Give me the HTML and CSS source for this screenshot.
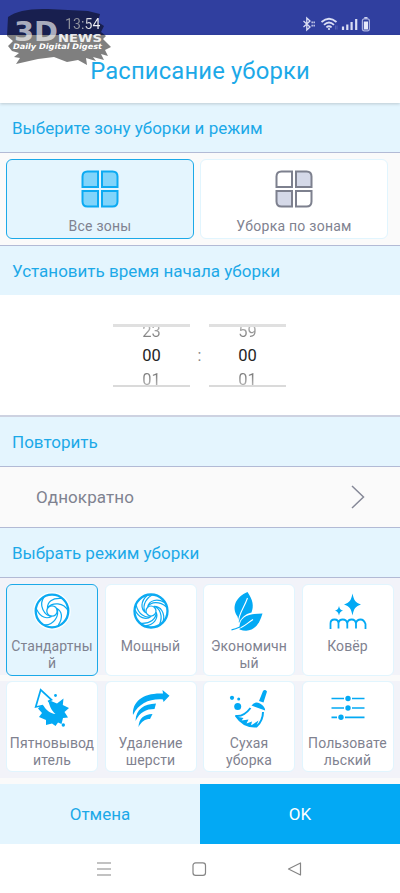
FILE: index.html
```html
<!DOCTYPE html>
<html lang="ru">
<head>
<meta charset="utf-8">
<meta name="viewport" content="width=device-width, initial-scale=1">
<title>Расписание уборки</title>
<link rel="stylesheet" href="styles.css">
</head>
<body>
<div class="phone">
  <div class="status">
    <span class="clock">13:54</span>
    <svg class="status-icons" width="70" height="16" viewBox="0 0 70 16" fill="none" stroke="#d9ddf4">
      <path d="M2.500 5 9 11 5.800 14V2L9 5 2.500 11" stroke-width="1.3"/>
      <path d="M10.500 6.300H14M10.500 9.700H14" stroke-width="1.7" stroke-dasharray="1.3 .7"/>
      <path d="M20.500 6Q28 -.5 35.500 6M23 8.800Q28 4.300 33 8.800M25.400 11.400Q28 9.200 30.600 11.400" stroke-width="1.8"/>
      <circle cx="28" cy="13" r="1.100" fill="#d9ddf4" stroke="none"/>
      <path d="M34.500 9.500v4M36 9.500v4" stroke="#5360b5" stroke-width="1"/>
      <path d="M42 14v-3.500M46.300 14V8.500M50.600 14V6M55.200 14V3" stroke-width="2.200"/>
      <rect x="61.400" y="2.800" width="7" height="12" rx="2" stroke="#a9b0df" stroke-width="1.200"/>
      <path d="M63.300 1.800h3.200" stroke-width="1.500"/>
      <rect x="62.800" y="5.500" width="4.200" height="8" fill="#e6e9fa" stroke="none"/>
    </svg>
  </div>
  <header class="title"><h1>Расписание уборки</h1></header>

  <h2 class="section s-zone">Выберите зону уборки и режим</h2>
  <div class="zones">
    <div class="zone selected">
      <svg width="38" height="38" viewBox="0 0 38 38" fill="#81d4fa" stroke="#0caaf2" stroke-width="2">
        <path d="M17 1.500V17H1.500V6.500Q1.500 1.500 6.500 1.500ZM21 1.500H31.500Q36.500 1.500 36.500 6.500V17H21ZM1.500 21H17V36.500H6.500Q1.500 36.500 1.500 31.500ZM21 21H36.500V31.500Q36.500 36.500 31.500 36.500H21Z"/>
      </svg>
      <span>Все зоны</span>
    </div>
    <div class="zone">
      <svg width="38" height="38" viewBox="0 0 38 38" fill="#d5d9e8" stroke="#7d808e" stroke-width="2">
        <path d="M17 1.500V17H1.500V6.500Q1.500 1.500 6.500 1.500ZM21 21H36.500V31.500Q36.500 36.500 31.500 36.500H21Z" fill="#fff"/>
        <path d="M21 1.500H31.500Q36.500 1.500 36.500 6.500V17H21ZM1.500 21H17V36.500H6.500Q1.500 36.500 1.500 31.500Z"/>
      </svg>
      <span>Уборка по зонам</span>
    </div>
  </div>

  <h2 class="section s-time">Установить время начала уборки</h2>
  <div class="picker">
    <div class="wheel"><span class="prev">23</span><span class="now">00</span><span class="next">01</span></div>
    <span class="colon">:</span>
    <div class="wheel"><span class="prev">59</span><span class="now">00</span><span class="next">01</span></div>
  </div>

  <h2 class="section s-repeat">Повторить</h2>
  <div class="repeat">
    <span>Однократно</span>
    <svg width="14" height="24" viewBox="0 0 14 24" fill="none" stroke="#858897" stroke-width="1.500"><path d="M1 1 12.500 12 1 23"/></svg>
  </div>

  <h2 class="section s-mode">Выбрать режим уборки</h2>
  <div class="modes">
    <div class="mode selected">
      <svg viewBox="0 0 38 38" fill="none" stroke="#0caaf2">
        <circle cx="19" cy="19" r="18" stroke="#fff" stroke-width="1.500"/>
        <circle cx="19" cy="19" r="16.300" fill="#fff" stroke-width="2.300"/>
        <circle cx="19" cy="19" r="5.200" stroke-width="1.300"/>
        <g id="blade" stroke-width="1.200"><path d="M14.500 16C19 10 31 10 35 19M14.500 16C14.500 10 19 6 28 6.500"/></g>
        <use href="#blade" transform="rotate(120 19 19)"/><use href="#blade" transform="rotate(240 19 19)"/>
      </svg>
      <span>Стандартны<br>й</span>
    </div>
    <div class="mode">
      <svg viewBox="0 0 38 38" fill="none" stroke="#0caaf2">
        <circle cx="19" cy="19" r="16.500" stroke-width="2.300"/>
        <circle cx="19" cy="19" r="5" stroke-width="1.200"/>
        <g id="swirl" stroke-width="1.200"><path d="M14 21C10 16 12 8 20 3M14 21C8 17 9 9 15 3.500"/></g>
        <use href="#swirl" transform="rotate(72 19 19)"/><use href="#swirl" transform="rotate(144 19 19)"/><use href="#swirl" transform="rotate(216 19 19)"/><use href="#swirl" transform="rotate(288 19 19)"/>
      </svg>
      <span>Мощный</span>
    </div>
    <div class="mode">
      <svg viewBox="0 0 38 38" fill="#03a9f4">
        <path d="M7.500 24.500C1 15 6 5 17.500 0C23 8 24 14 21.500 20.500C15 22 11 26 9 31Z"/>
        <path d="M9.500 34.500C10 25 18 21.500 32.500 21.500C29 34 22 42 9.500 37.500Z"/>
        <path d="M8.500 29.500C9 21 14 16 17.500 6M7 37C13 36 16 32 23 27.500" fill="none" stroke="#fff" stroke-width="1.100"/>
        <path d="M1.500 37.800C6 37.300 8 36 11 34.500" fill="none" stroke="#03a9f4" stroke-width="1.200"/>
      </svg>
      <span>Экономичн<br>ый</span>
    </div>
    <div class="mode">
      <svg viewBox="0 0 38 38" fill="#03a9f4">
        <path d="M23.500 1.500C25 9 26.500 10.500 32 12.500C26.500 14.500 25 16 23.500 23.500C22 16 20.500 14.500 15 12.500C20.500 10.500 22 9 23.500 1.500ZM10 14C10.800 17 11.500 18 14 18.700C11.500 19.400 10.800 20.400 10 23.400C9.200 20.400 8.500 19.400 6 18.700C8.500 18 9.200 17 10 14Z"/>
        <path d="M1.500 37V31.500Q1.500 27.500 5.500 27.500T9.500 31.500V36.500M9.500 31Q10 27.500 13.800 27.500T18.300 31.500V36.500M18.300 31Q19 27.500 22.700 27.500T27 31.500V36.500M27 31Q28 27.500 31.500 27.500T36.500 32V37" fill="none" stroke="#03a9f4" stroke-width="1.800"/>
      </svg>
      <span>Ковёр</span>
    </div>
    <div class="mode">
      <svg viewBox="0 0 38 38" fill="#03a9f4">
        <path d="M12 13 18 12 24 14.500 30.500 9.500 29.800 16 36 19 31.500 23 35 28.500 30 29 28.500 35 25 33.500 22.500 37 19 34.500 13 36 13 31 6 28 9 24 5 19.500Z"/>
        <path d="M7.700 .8 18.500 10.800 15.500 12.500C17 18 18.500 21.500 22.500 25C17 24.500 13 21 10.500 16.500L2.700 18Z" fill="#fff"/>
        <path d="M10 16.500 2.700 18 7.700 .8 18.500 10.800 15 12.500" fill="none" stroke="#03a9f4" stroke-width="1.700"/>
        <circle cx="22.500" cy="6.500" r="1.400"/><circle cx="30.300" cy="36" r="1.700"/>
      </svg>
      <span>Пятновывод<br>итель</span>
    </div>
    <div class="mode">
      <svg viewBox="0 0 38 38" fill="#03a9f4">
        <path d="M1 26C0 12 12 3.500 31 4.500L30.500 1 37.500 6.800 31.500 13 31 10.500C18 9.500 7 14 1 26Z"/>
        <path d="M3.500 32C4 20 12 15 24 14.500L22.500 20C14 20 8 23 3.500 32Z"/>
        <path d="M6.500 38C7 29 12 25.500 20.500 25L18 30C13 30 9.500 32.500 6.500 38Z"/>
      </svg>
      <span>Удаление<br>шерсти</span>
    </div>
    <div class="mode">
      <svg viewBox="0 0 38 38" fill="#03a9f4">
        <circle cx="2" cy="8.800" r="2.100"/><circle cx="8.700" cy="10" r="1.500"/><circle cx="7.700" cy="17.500" r="3.500"/>
        <path d="M33 2Q35 0 37 2.500L33.500 13.500 29 12ZM21.500 16.500Q25 11.500 30 14.500T35.200 21.500Z"/>
        <path d="M20.500 19C16 25 11 27.500 6 27C12 36 20 38 26.500 37.500C31 33.500 33 28 33 23" fill="none" stroke="#03a9f4" stroke-width="2" stroke-linejoin="round"/>
        <path d="M6 27.500 13.500 29 11.500 31.500 18.500 30.500 16.500 34.500 22 32.500 21 36.500 28.500 31.500 26 38 15 35.500Z"/>
      </svg>
      <span>Сухая<br>уборка</span>
    </div>
    <div class="mode">
      <svg viewBox="0 0 38 38" fill="#03a9f4" stroke="#03a9f4">
        <path d="M2.500 9.500H15M23 9.500H35.500M2.500 19H15M23 19H35.500M2.500 28.300H8M16 28.300H35.500" stroke-width="1.700"/>
        <g stroke="none"><circle cx="19" cy="9.500" r="2.700"/><circle cx="19" cy="19" r="2.700"/><circle cx="12" cy="28.300" r="2.700"/></g>
      </svg>
      <span>Пользовате<br>льский</span>
    </div>
  </div>

  <div class="actions"><div class="cancel">Отмена</div><div class="ok">OK</div></div>
  <nav class="nav">
    <svg width="208" height="16" viewBox="0 0 208 16" fill="none" stroke="#858585" stroke-width="1.200">
      <path d="M1 2H15M1 8H15M1 14H15"/>
      <rect x="97" y="1.800" width="12.500" height="12.500" rx="2.600"/>
      <path d="M204.500 2V14L192.500 8Z" stroke-linejoin="round"/>
    </svg>
  </nav>

  <svg class="watermark" width="116" height="70" viewBox="0 0 116 70">
    <path d="M8 17Q20 8 48 9L88 11 100 14 98 22 104 26 101 32 106 36 103 39 111 47 105 50 108 56 101 54 104 60 93 57 96 61 86 58 87 65 78 60 67 62 54 57 38 59 16 64 20 58 14 57 19 53 12 51 8 46 13 41 7 36Z" fill="#000" fill-opacity=".5"/>
    <text class="wm-big" x="14" y="40.500" textLength="44" lengthAdjust="spacingAndGlyphs">3D</text>
    <text class="wm-news" x="58" y="41.500" textLength="44" lengthAdjust="spacingAndGlyphs">NEWS</text>
    <text class="wm-tag" x="13" y="48.500" textLength="89" lengthAdjust="spacingAndGlyphs">Daily Digital Digest</text>
  </svg>
</div>
</body>
</html>
```
FILE: styles.css
```css
* { box-sizing: border-box; }
body { margin: 0; background: #fff; font-family: Roboto, "Noto Sans", sans-serif; color: #7f8290; }
h1, h2 { margin: 0; font-weight: 400; }
svg { display: block; flex: none; }
.phone { position: relative; width: 400px; height: 893px; display: flex; flex-direction: column; overflow: hidden; background: #fafafa; }
.phone > * { flex: none; }

.status { height: 35px; background: #303f9f; display: flex; align-items: center; justify-content: space-between; padding: 12px 29px 0 65px; }
.clock { position: relative; z-index: 2; font-size: 14px; line-height: 16px; letter-spacing: .1px; color: transparent; background: linear-gradient(90deg, #8f919c 40%, #f0f0f6 75%); background-clip: text; -webkit-background-clip: text; }
.title { height: 68px; background: #fff; display: flex; align-items: center; justify-content: center; padding-top: 3px; box-shadow: 0 1px 3px rgba(0, 0, 0, .18); position: relative; }
.title h1 { font-size: 23.8px; color: #1ca9e8; line-height: 30px; letter-spacing: .15px; }

.section { display: flex; align-items: center; padding-left: 12px; font-size: 17px; color: #1ca9e8; background: #e4f5fe; border-bottom: 1px solid #b2bad5; }
.s-zone { height: 50px; }
.s-time { height: 49px; border-bottom: 0; }
.s-repeat { height: 50px; }
.s-mode { height: 50px; }

.zones { height: 93px; display: grid; grid-template-columns: 188px 188px; gap: 6px; padding: 6px; border-bottom: 1px solid #b2bad5; }
.zone { height: 80px; background: #fff; border: 1px solid #e1f5fe; border-radius: 6px; display: flex; flex-direction: column; align-items: center; padding-top: 10px; gap: 9px; font-size: 14px; letter-spacing: .25px; line-height: 18px; }
.zone.selected, .mode.selected { background: #e4f5fe; border-color: #1ca9e8; }

.picker { height: 122px; background: #fff; border-bottom: 2px solid #cdd2e1; display: flex; justify-content: center; align-items: center; gap: 7px; padding-right: 1px; }
.wheel { width: 77px; height: 63px; border-top: 3px solid #e0e0e0; border-bottom: 2px solid #dadada; overflow: hidden; display: flex; flex-direction: column; align-items: center; justify-content: center; font-size: 16.500px; line-height: 24px; }
.wheel span { flex: none; }
.prev, .next { color: transparent; background-clip: text; -webkit-background-clip: text; }
.prev { background-image: linear-gradient(#bbb 20%, #777 80%); }
.next { background-image: linear-gradient(#777 20%, #bbb 80%); }
.now { color: #252525; }
.colon { width: 5px; font-size: 16px; color: #858585; text-align: center; }

.repeat { height: 61px; display: flex; align-items: center; justify-content: space-between; padding: 0 35px 0 36px; font-size: 17px; letter-spacing: .1px; border-bottom: 1px solid #b2bad5; }

.modes { height: 206px; padding: 6px 6px 0; display: grid; grid-template-columns: repeat(4, 92px); grid-template-rows: 92px 91px; column-gap: 6.500px; row-gap: 5px; align-content: start; background: linear-gradient(#f2f3f9 0 97px, #fafafa 97px 103px, #f2f3f9 103px 200px, #fafafa 200px); }
.mode { background: #fff; border: 1px solid #e1f5fe; border-radius: 6px; display: flex; flex-direction: column; align-items: center; padding-top: 7px; gap: 8px; text-align: center; font-size: 14px; letter-spacing: .1px; line-height: 17px; }
.mode svg { width: 38px; height: 38px; overflow: visible; }

.actions { height: 60px; display: grid; grid-template-columns: 1fr 1fr; font-size: 17px; }
.actions div { display: flex; align-items: center; justify-content: center; }
.cancel { background: #e4f5fe; color: #1ca9e8; }
.ok { background: #03a9f4; color: #fff; }
.nav { height: 49px; background: #fff; display: flex; justify-content: center; align-items: center; }

.watermark { position: absolute; left: 0; top: 0; z-index: 1; }
.watermark text { fill: #fff; font-family: "DejaVu Sans", sans-serif; font-weight: 700; font-style: italic; }
.watermark .wm-big { font-size: 27px; fill-opacity: .65; font-style: normal; }
.watermark .wm-news { font-size: 10px; fill-opacity: .9; font-style: normal; }
.watermark .wm-tag { font-size: 7.500px; }
```
